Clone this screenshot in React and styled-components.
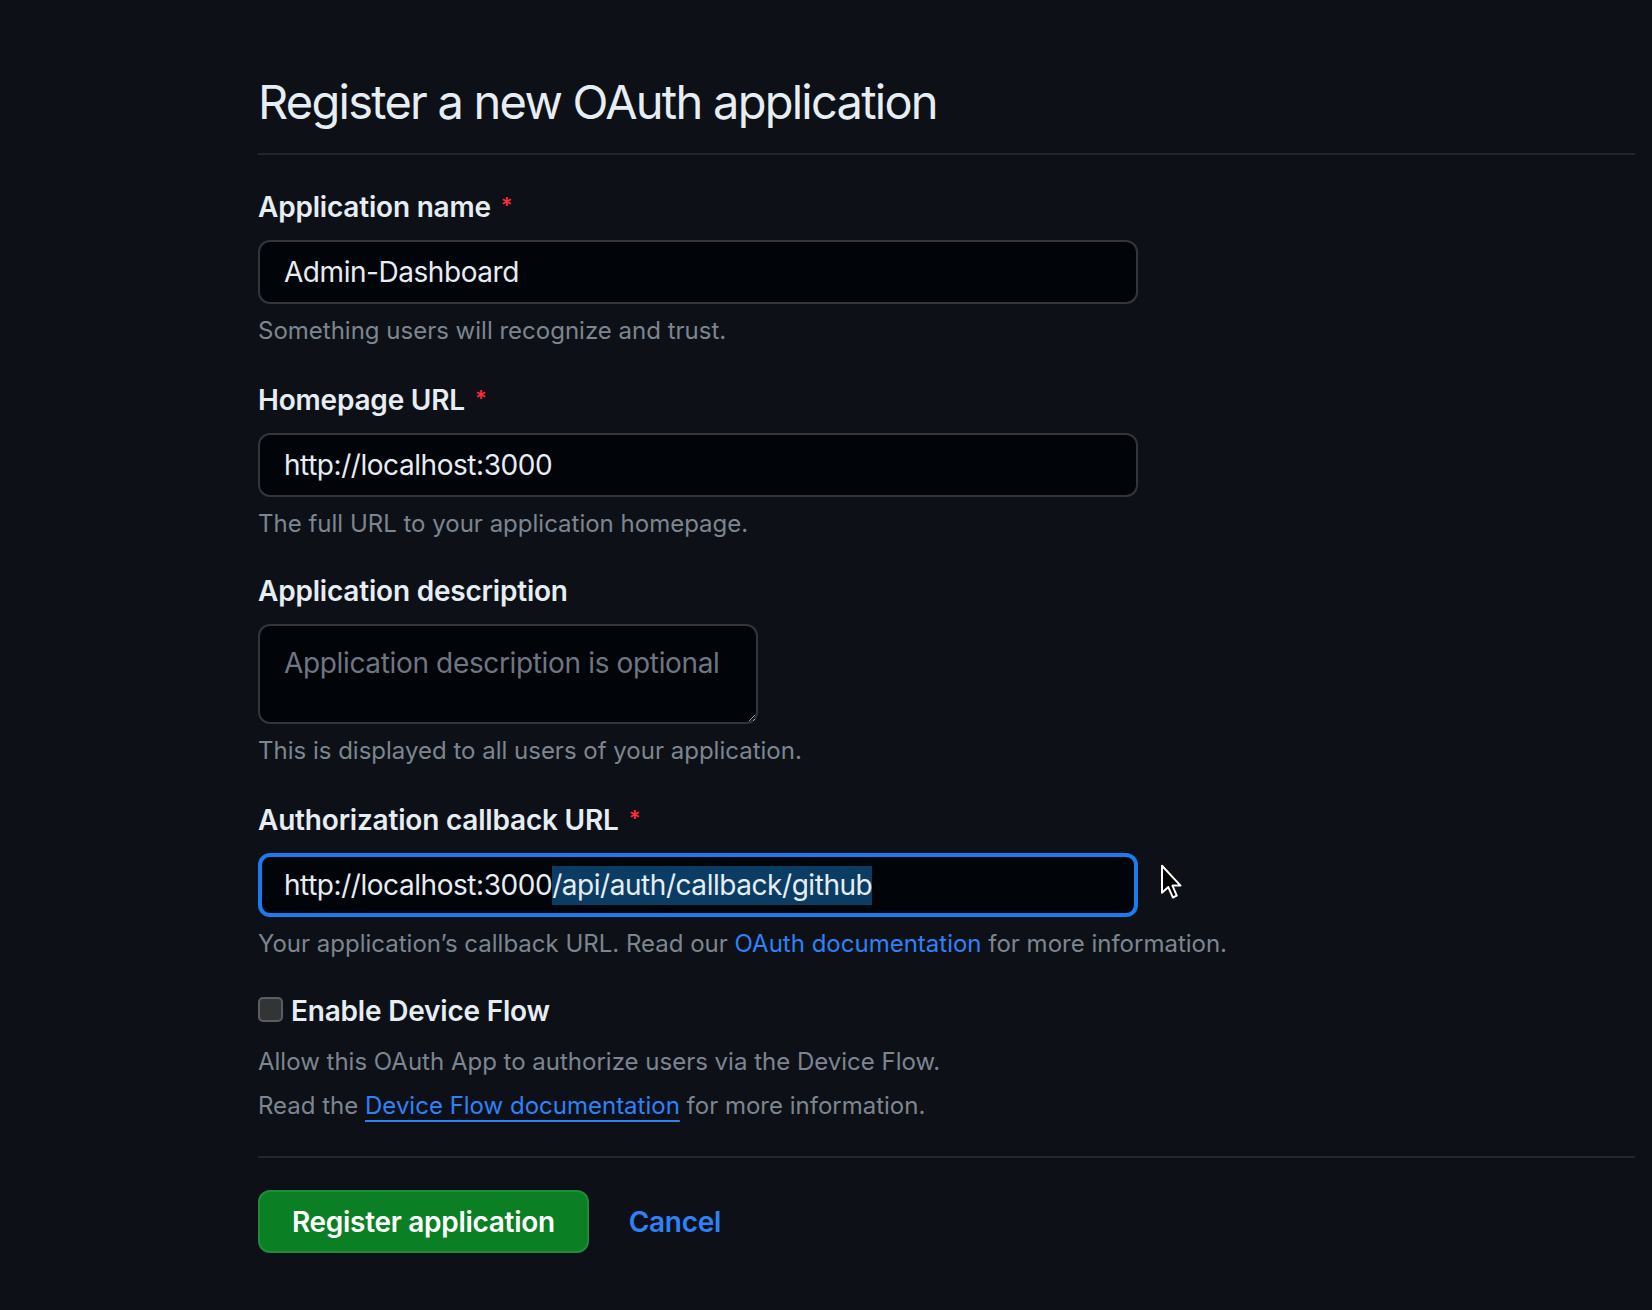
import React from "react";
import styled, { createGlobalStyle } from "styled-components";

const Global = createGlobalStyle`
  html, body { margin: 0; padding: 0; background: #0d1117; }
  body { font-family: Inter, "Noto Sans", "Liberation Sans", sans-serif; color: #e6edf3; }
  * { box-sizing: border-box; }
`;

const Page = styled.div`
  min-height: 1310px;
  background: #0d1117;
  padding: 66px 17px 0 258px;
`;

const Subhead = styled.div`
  padding-bottom: 15px;
  border-bottom: 2px solid #21262d;
  margin-bottom: 29px;
`;

const Title = styled.h2`
  margin: 0;
  font-size: 47px;
  line-height: 72px;
  font-weight: 400;
  color: #e6edf3;
  letter-spacing: -1.75px;
`;

const Form = styled.form`
  display: flex;
  flex-direction: column;
  gap: 28px;
`;

const Group = styled.div`
  display: flex;
  flex-direction: column;
  align-items: flex-start;
`;

const Label = styled.label`
  font-size: 28px;
  line-height: 42px;
  font-weight: 600;
  color: #e6edf3;
  margin-bottom: 12px;
  letter-spacing: -0.2px;
`;

const Required = styled.span`
  color: #ff2a3f;
  font-size: 22px;
  margin-left: 10px;
  vertical-align: 4px;
`;

const TextInput = styled.input`
  width: 880px;
  height: 64px;
  padding: 0 24px;
  border: 2px solid #30363d;
  border-radius: 12px;
  background: #010409;
  color: #e6edf3;
  font-family: inherit;
  font-size: 28px;
  letter-spacing: -0.45px;
  outline: none;
`;

const FieldRow = styled.div`
  position: relative;
`;

const FocusedField = styled.div`
  width: 880px;
  height: 64px;
  padding: 0 22px;
  border: 4px solid #1a7cf0;
  border-radius: 12px;
  background: #010409;
  color: #e6edf3;
  font-size: 28px;
  letter-spacing: -0.45px;
  display: flex;
  align-items: center;
  white-space: pre;
`;

const Selected = styled.span`
  background: #0b3d64;
  line-height: 39px;
`;

const Cursor = styled.svg`
  position: absolute;
  left: 902px;
  top: 11px;
`;

const TextArea = styled.textarea`
  width: 500px;
  height: 100px;
  padding: 16px 24px;
  border: 2px solid #30363d;
  border-radius: 12px;
  background: #010409;
  color: #e6edf3;
  font-family: inherit;
  font-size: 28px;
  line-height: 42px;
  letter-spacing: -0.35px;
  outline: none;
  &::placeholder { color: #6e7681; }
`;

const Note = styled.p`
  margin: ${(p) => p.$top ?? 9}px 0 0;
  font-size: 24px;
  line-height: 36px;
  color: #7d8590;
`;

const Link = styled.a`
  color: #2f81f7;
  text-decoration: ${(p) => (p.$underline ? "underline" : "none")};
  text-decoration-thickness: 2px;
  text-underline-offset: 6px;
`;

const CheckRow = styled.label`
  display: flex;
  align-items: center;
  gap: 8px;
  font-size: 28px;
  line-height: 42px;
  font-weight: 600;
  color: #e6edf3;
  letter-spacing: -0.2px;
`;

const Checkbox = styled.span`
  width: 25px;
  height: 25px;
  border: 2px solid #5a5d61;
  border-radius: 5px;
  background: #333436;
  margin-top: -4px;
`;

const Divider = styled.hr`
  margin: 32px 0 32px;
  border: 0;
  border-top: 2px solid #21262d;
`;

const Actions = styled.div`
  display: flex;
  align-items: center;
  gap: 40px;
`;

const PrimaryButton = styled.button`
  height: 63px;
  padding: 0 32px;
  border: 2px solid rgba(240, 246, 252, 0.1);
  border-radius: 12px;
  background: #0a7f24;
  color: #ffffff;
  font-family: inherit;
  font-size: 28px;
  font-weight: 600;
  letter-spacing: -0.3px;
`;

const CancelLink = styled.a`
  color: #2f81f7;
  font-size: 28px;
  font-weight: 600;
  letter-spacing: -0.3px;
  text-decoration: none;
`;

export default function App() {
  return (
    <>
      <Global />
      <Page>
        <Subhead>
          <Title>Register a new OAuth application</Title>
        </Subhead>
        <Form onSubmit={(e) => e.preventDefault()}>
          <Group>
            <Label>
              Application name<Required>*</Required>
            </Label>
            <TextInput defaultValue="Admin-Dashboard" />
            <Note>Something users will recognize and trust.</Note>
          </Group>
          <Group>
            <Label>
              Homepage URL<Required>*</Required>
            </Label>
            <TextInput defaultValue="http://localhost:3000" />
            <Note>The full URL to your application homepage.</Note>
          </Group>
          <Group>
            <Label>Application description</Label>
            <TextArea placeholder="Application description is optional" />
            <Note>This is displayed to all users of your application.</Note>
          </Group>
          <Group>
            <Label>
              Authorization callback URL<Required>*</Required>
            </Label>
            <FieldRow>
              <FocusedField>
                http://localhost:3000<Selected>/api/auth/callback/github</Selected>
              </FocusedField>
              <Cursor width="22" height="36" viewBox="0 0 12 20">
                <path
                  d="M1 1 L1 16 L4.5 12.8 L7 18.6 L9.2 17.6 L6.8 12 L11.3 12 Z"
                  fill="#000"
                  stroke="#fff"
                  strokeWidth="1.1"
                  strokeLinejoin="round"
                />
              </Cursor>
            </FieldRow>
            <Note>
              Your application’s callback URL. Read our <Link href="#">OAuth documentation</Link> for more information.
            </Note>
          </Group>
          <Group>
            <CheckRow>
              <Checkbox />
              Enable Device Flow
            </CheckRow>
            <Note $top={12}>Allow this OAuth App to authorize users via the Device Flow.</Note>
            <Note $top={8}>
              Read the <Link href="#" $underline>Device Flow documentation</Link> for more information.
            </Note>
          </Group>
        </Form>
        <Divider />
        <Actions>
          <PrimaryButton type="button">Register application</PrimaryButton>
          <CancelLink href="#">Cancel</CancelLink>
        </Actions>
      </Page>
    </>
  );
}
